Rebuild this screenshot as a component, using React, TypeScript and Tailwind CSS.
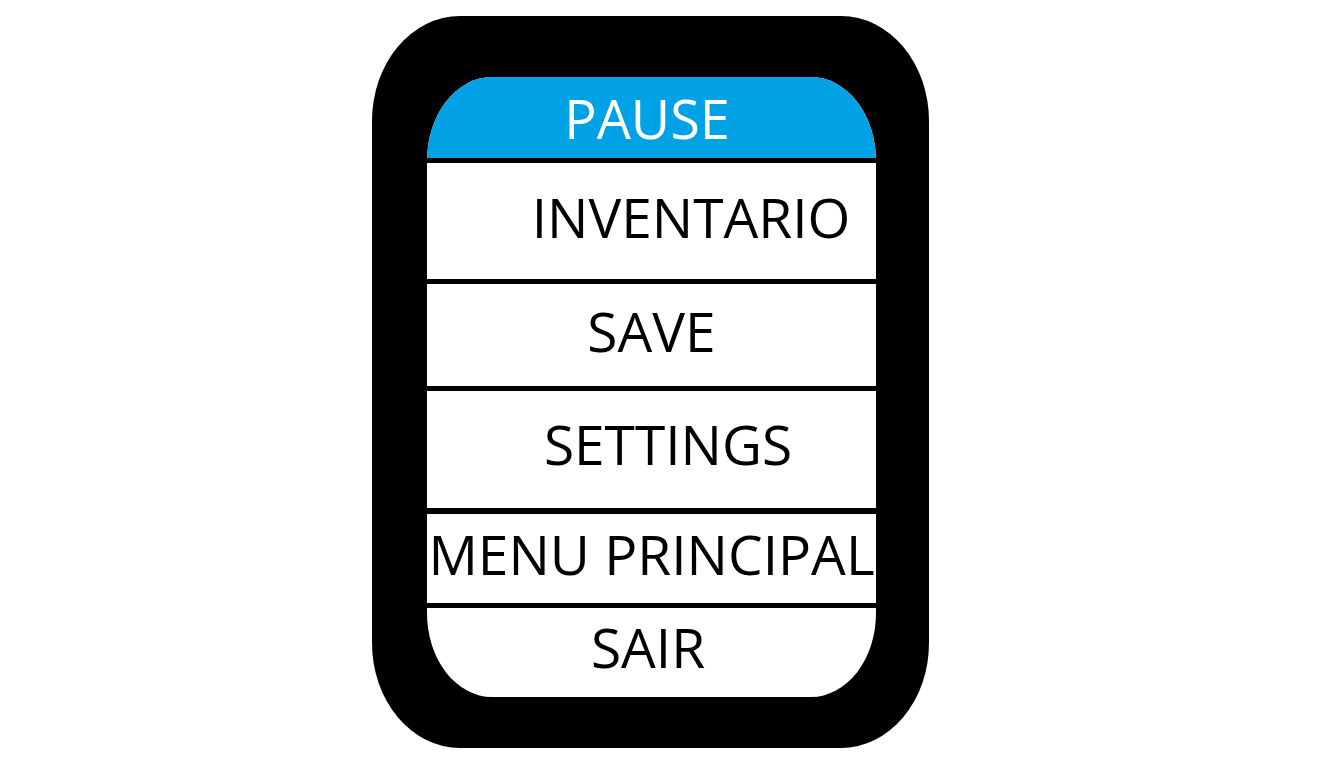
import React from "react";

const font = { fontFamily: '"Open Sans", "Liberation Sans", sans-serif' };

export default function App() {
  return (
    <div className="w-[1328px] h-[782px] bg-white pt-[16px] pl-[372px]" style={font}>
      <div className="w-[557px] h-[732px] bg-black rounded-[88px/105px] pt-[61px] pl-[55px]">
        <div className="w-[449px] h-[620px] bg-white rounded-[65px/84px] overflow-hidden flex flex-col text-[55px] leading-none text-black">
          <div className="h-[81px] bg-[#00a2e6] text-white flex items-center justify-center pt-[1px] pr-[9px] text-[54px]">
            PAUSE
          </div>
          <div className="h-[5px] bg-black" />
          <div className="h-[116px] flex items-center justify-center pb-[10px] pl-[79px]">INVENTARIO</div>
          <div className="h-[5px] bg-black" />
          <div className="h-[102px] flex items-center justify-center pb-[10px]">SAVE</div>
          <div className="h-[5px] bg-black" />
          <div className="h-[117px] flex items-center justify-center pb-[12px] pl-[33px]">SETTINGS</div>
          <div className="h-[6px] bg-black" />
          <div className="h-[89px] flex items-center justify-center pb-[10px] whitespace-nowrap">MENU PRINCIPAL</div>
          <div className="h-[5px] bg-black" />
          <div className="h-[89px] flex items-center justify-center pb-[12px] pr-[7px]">SAIR</div>
        </div>
      </div>
    </div>
  );
}
